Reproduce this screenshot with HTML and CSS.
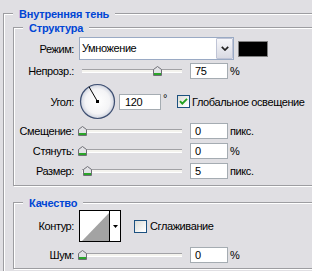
FILE: index.html
```html
<!DOCTYPE html>
<html lang="ru">
<head>
<meta charset="utf-8">
<title>Внутренняя тень</title>
<link rel="stylesheet" href="styles.css">
</head>
<body>
<div class="dialog">
  <fieldset class="group outer">
    <legend>Внутренняя тень</legend>

    <fieldset class="group inner">
      <legend>Структура</legend>

      <div class="row row-mode">
        <span class="lbl">Режим:</span>
        <div class="select">
          <span class="select-text">Умножение</span>
          <span class="select-btn"><svg width="8" height="5" viewBox="0 0 8 5"><path d="M0.8 0.8 L4 4 L7.2 0.8" fill="none" stroke="#222" stroke-width="1.7"/></svg></span>
        </div>
        <span class="swatch"></span>
      </div>

      <div class="row row-slider row-opacity">
        <span class="lbl">Непрозр.:</span>
        <div class="slider">
          <span class="track"></span>
          <svg class="thumb" style="left:76px" width="9" height="10" viewBox="0 0 9 10"><path d="M4.5 0.5 L8.5 3.5 V9.5 H0.5 V3.5 Z" fill="#e2e2e6" stroke="#6e6e74"/><rect x="1" y="7" width="7" height="2" fill="#2aa52a"/></svg>
        </div>
        <span class="field">75</span>
        <span class="unit">%</span>
      </div>

      <div class="row row-angle">
        <span class="lbl">Угол:</span>
        <svg class="dial" width="37" height="37" viewBox="0 0 37 37">
          <defs>
            <radialGradient id="dialFill" cx="50%" cy="50%" r="50%">
              <stop offset="0" stop-color="#ffffff"/>
              <stop offset="0.72" stop-color="#f4f4f6"/>
              <stop offset="0.9" stop-color="#dde0e8"/>
              <stop offset="1" stop-color="#b9c0d0"/>
            </radialGradient>
          </defs>
          <circle cx="18.5" cy="18.5" r="17" fill="url(#dialFill)" stroke="#3e4f72" stroke-width="1.2"/>
          <line x1="18.5" y1="18.5" x2="10" y2="3.8" stroke="#000" stroke-width="1"/>
          <rect x="17" y="17" width="3" height="3" fill="#000"/>
        </svg>
        <span class="field field-angle">120</span>
        <span class="deg">°</span>
        <span class="check"><svg width="11" height="11" viewBox="0 0 11 11"><path d="M2 5.2 L4.3 7.6 L9 2.8" fill="none" stroke="#21a121" stroke-width="1.9"/></svg></span>
        <span class="check-text">Глобальное освещение</span>
      </div>

      <div class="row row-slider row-offset">
        <span class="lbl">Смещение:</span>
        <div class="slider">
          <span class="track"></span>
          <svg class="thumb" style="left:1px" width="9" height="10" viewBox="0 0 9 10"><path d="M4.5 0.5 L8.5 3.5 V9.5 H0.5 V3.5 Z" fill="#e2e2e6" stroke="#6e6e74"/><rect x="1" y="7" width="7" height="2" fill="#2aa52a"/></svg>
        </div>
        <span class="field">0</span>
        <span class="unit">пикс.</span>
      </div>

      <div class="row row-slider row-choke">
        <span class="lbl">Стянуть:</span>
        <div class="slider">
          <span class="track"></span>
          <svg class="thumb" style="left:1px" width="9" height="10" viewBox="0 0 9 10"><path d="M4.5 0.5 L8.5 3.5 V9.5 H0.5 V3.5 Z" fill="#e2e2e6" stroke="#6e6e74"/><rect x="1" y="7" width="7" height="2" fill="#2aa52a"/></svg>
        </div>
        <span class="field">0</span>
        <span class="unit">%</span>
      </div>

      <div class="row row-slider row-size">
        <span class="lbl">Размер:</span>
        <div class="slider">
          <span class="track"></span>
          <svg class="thumb" style="left:6px" width="9" height="10" viewBox="0 0 9 10"><path d="M4.5 0.5 L8.5 3.5 V9.5 H0.5 V3.5 Z" fill="#e2e2e6" stroke="#6e6e74"/><rect x="1" y="7" width="7" height="2" fill="#2aa52a"/></svg>
        </div>
        <span class="field">5</span>
        <span class="unit">пикс.</span>
      </div>
    </fieldset>

    <fieldset class="group inner quality">
      <legend>Качество</legend>

      <div class="row row-contour">
        <span class="lbl">Контур:</span>
        <div class="contour">
          <svg class="contour-preview" width="29" height="30" viewBox="0 0 29 30"><rect width="29" height="30" fill="#fff"/><polygon points="2,30 29,2 29,30" fill="#a3a3a3"/></svg>
          <span class="contour-btn"><svg width="5" height="3" viewBox="0 0 5 3"><polygon points="0,0 5,0 2.5,3" fill="#000"/></svg></span>
        </div>
        <span class="check check-off"></span>
        <span class="check-text">Сглаживание</span>
      </div>

      <div class="row row-slider row-noise">
        <span class="lbl">Шум:</span>
        <div class="slider">
          <span class="track"></span>
          <svg class="thumb" style="left:1px" width="9" height="10" viewBox="0 0 9 10"><path d="M4.5 0.5 L8.5 3.5 V9.5 H0.5 V3.5 Z" fill="#e2e2e6" stroke="#6e6e74"/><rect x="1" y="7" width="7" height="2" fill="#2aa52a"/></svg>
        </div>
        <span class="field">0</span>
        <span class="unit">%</span>
      </div>
    </fieldset>
  </fieldset>
</div>
</body>
</html>
```

FILE: styles.css
```css
* { box-sizing: border-box; }

html, body {
  margin: 0;
  padding: 0;
  overflow: hidden;
}

body {
  width: 312px;
  height: 271px;
  background: #e0dfe3;
  font-family: "Liberation Sans", Arial, sans-serif;
  font-size: 11px;
  letter-spacing: -0.4px;
  color: #000;
}

.dialog {
  padding: 7px 0 0 3px;
}

.group {
  margin: 0;
  min-width: 0;
  border: 1px solid #9d9da1;
  box-shadow: inset 1px 1px 0 #fff, 1px 1px 0 #fff;
}

.group > legend {
  padding: 0 6px;
  height: 13px;
  line-height: 14px;
  font-size: 11px;
  letter-spacing: -0.2px;
  font-weight: bold;
  color: #0046d5;
  background: #e0dfe3;
}

.outer {
  width: 345px;
  padding: 1px 0 10px 9px;
}

.inner {
  width: 330px;
  padding: 0 0 6px 0;
}

.inner > legend {
  margin-left: 9px;
}

.quality {
  margin-top: 10px;
  padding-bottom: 5px;
}

.row {
  display: flex;
  align-items: center;
}

.lbl {
  flex: none;
  width: 60px;
  text-align: right;
  white-space: nowrap;
}

.row-mode { height: 23px; margin-top: 3px; }
.row-opacity { margin-top: 3px; }
.row-angle { height: 37px; margin-top: 4px; }
.row-offset { margin-top: 3px; }
.row-choke { margin-top: 4px; }
.row-size { margin-top: 4px; }
.row-contour { height: 32px; margin-top: 1px; }
.row-noise { margin-top: 5px; }
.row-slider { height: 16px; }

/* dropdown */
.select {
  flex: none;
  margin-left: 5px;
  width: 155px;
  height: 23px;
  border: 1px solid #9aaac4;
  background: #fff;
  display: flex;
}

.select-text {
  flex: 1;
  padding-left: 2px;
  line-height: 21px;
}

.select-btn {
  flex: none;
  width: 17px;
  border: 1px solid #bfc4d6;
  border-radius: 1px;
  background: linear-gradient(#f7f7fa, #d9dae3);
  display: flex;
  align-items: center;
  justify-content: center;
}

.swatch {
  flex: none;
  margin-left: 4px;
  width: 30px;
  height: 16px;
  border: 1px solid #808080;
  background: #000;
}

/* slider */
.slider {
  flex: none;
  position: relative;
  margin-left: 3px;
  width: 110px;
  height: 16px;
  padding: 0 5px;
  display: flex;
  align-items: center;
}

.track {
  flex: 1;
  height: 4px;
  border-top: 1px solid #a2a2a6;
  border-bottom: 1px solid #fff;
  background: #f4f3ee;
}

.thumb {
  position: absolute;
  top: 3px;
}

/* text fields */
.field {
  flex: none;
  margin-left: 3px;
  width: 38px;
  height: 16px;
  border: 1px solid #a5acb2;
  background: #fff;
  padding-left: 4px;
  line-height: 14px;
}

.unit {
  margin-left: 2px;
}

/* angle */
.dial {
  flex: none;
  margin-left: 5px;
}

.field-angle {
  width: 42px;
  padding-left: 5px;
}

.deg {
  flex: none;
  width: 12px;
  margin-left: 2px;
  align-self: flex-start;
  margin-top: 9px;
  line-height: 12px;
}

.check {
  flex: none;
  width: 13px;
  height: 13px;
  margin-left: 2px;
  border: 1px solid #1c5180;
  background: linear-gradient(135deg, #dcdcd6 0%, #ffffff 90%);
  display: flex;
  align-items: center;
  justify-content: center;
}

.check-text {
  margin-left: 2px;
  white-space: nowrap;
}

/* contour */
.contour {
  flex: none;
  margin-left: 5px;
  width: 42px;
  height: 32px;
  border: 1px solid #000;
  background: #fff;
  display: flex;
}

.contour-preview {
  flex: none;
  display: block;
}

.contour-btn {
  flex: 1;
  border-left: 1px solid #000;
  display: flex;
  align-items: center;
  justify-content: center;
}

.check-off {
  margin-left: 13px;
}

.row-contour .check-text {
  margin-left: 3px;
}
```
